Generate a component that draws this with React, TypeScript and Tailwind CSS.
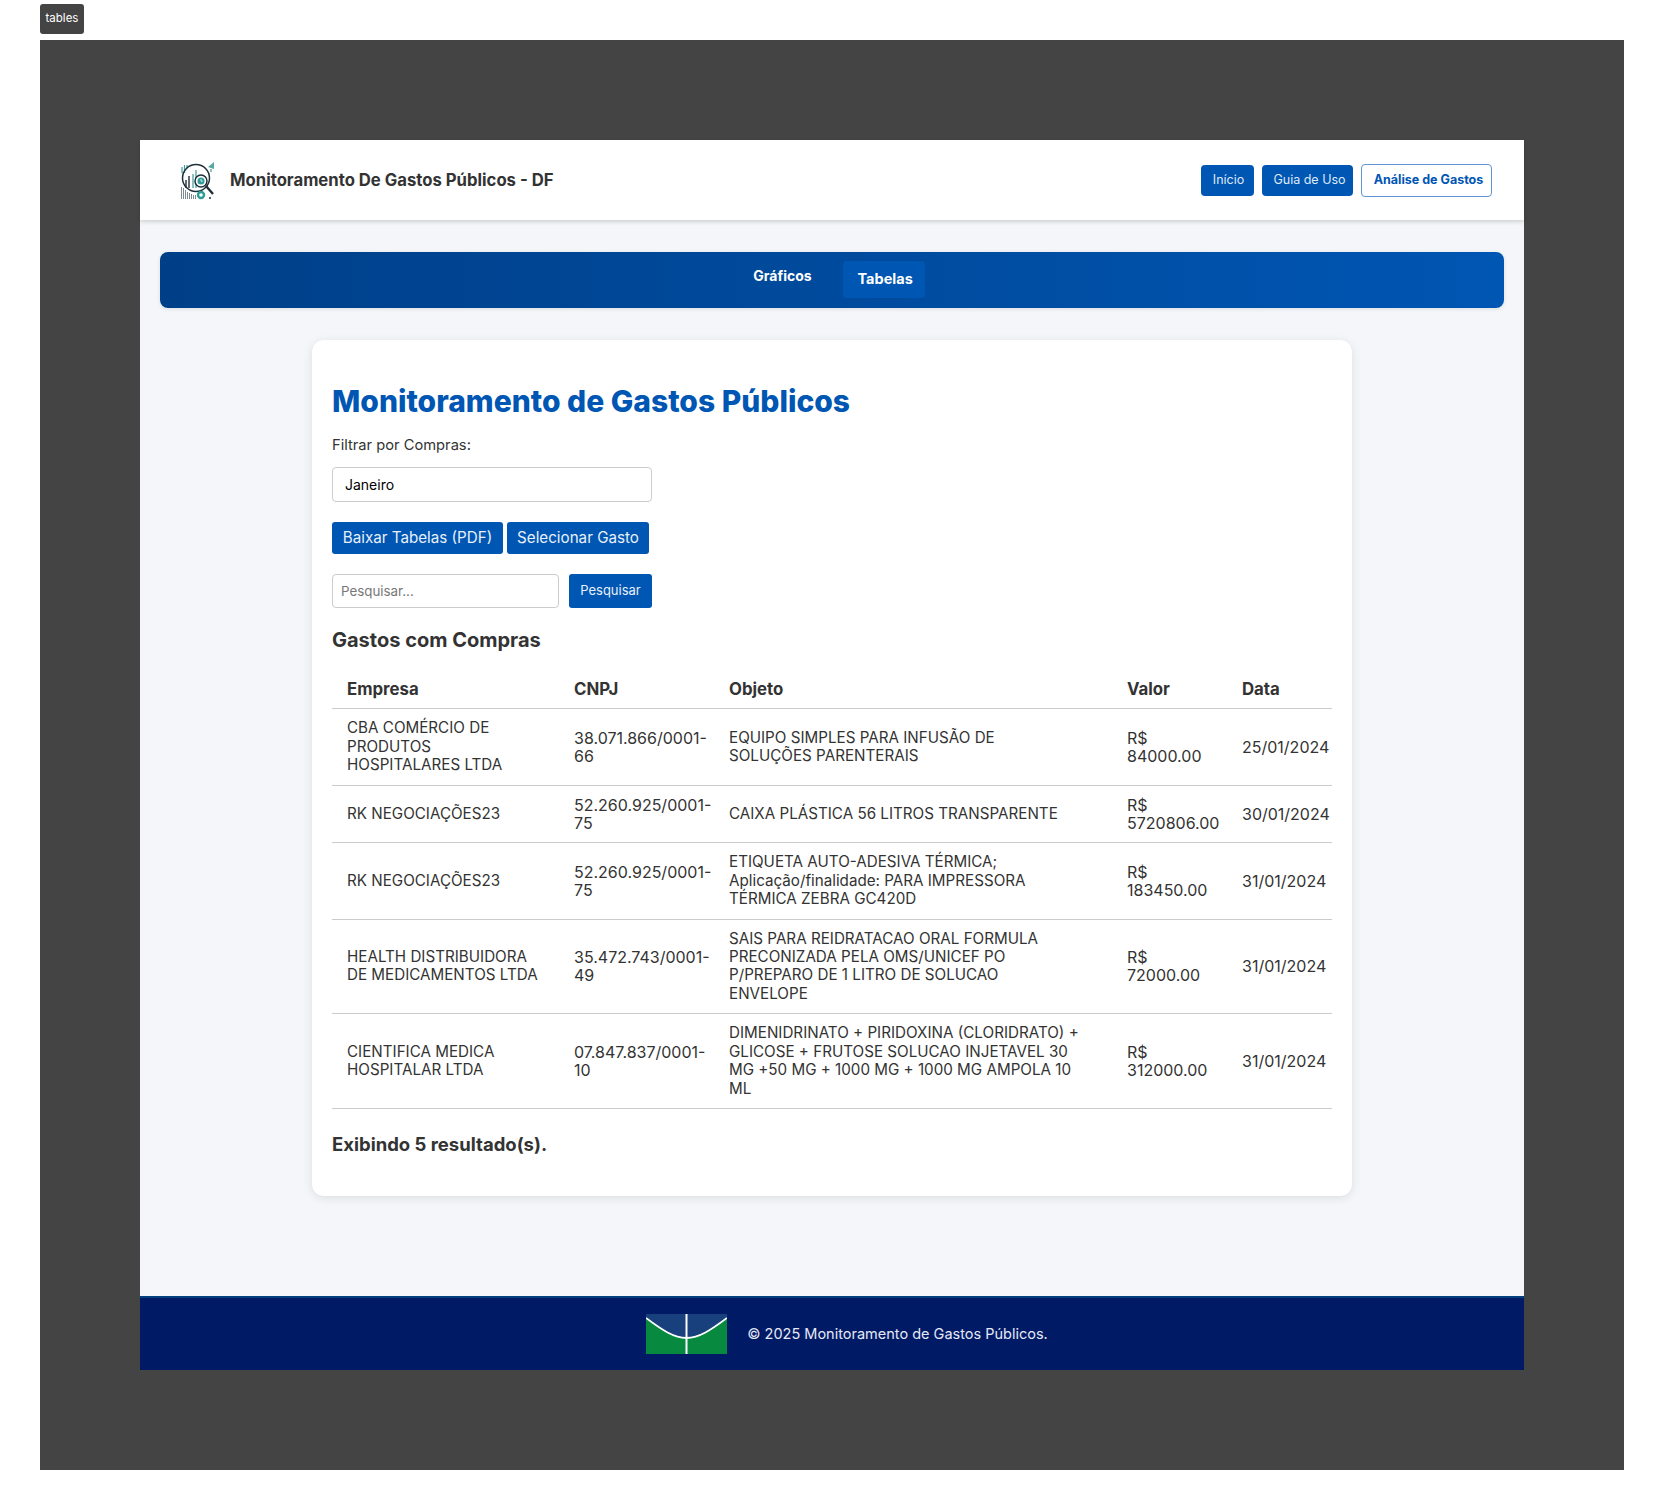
const font = "font-['Inter','Liberation_Sans',sans-serif]";

const rows = [
  { empresa: 'CBA COMÉRCIO DE PRODUTOS HOSPITALARES LTDA', cnpj: '38.071.866/0001-66', objeto: 'EQUIPO SIMPLES PARA INFUSÃO DE\nSOLUÇÕES PARENTERAIS', valor: 'R$ 84000.00', data: '25/01/2024' },
  { empresa: 'RK NEGOCIAÇÕES23', cnpj: '52.260.925/0001-75', objeto: 'CAIXA PLÁSTICA 56 LITROS TRANSPARENTE', valor: 'R$ 5720806.00', data: '30/01/2024' },
  { empresa: 'RK NEGOCIAÇÕES23', cnpj: '52.260.925/0001-75', objeto: 'ETIQUETA AUTO-ADESIVA TÉRMICA;\nAplicação/finalidade: PARA IMPRESSORA\nTÉRMICA ZEBRA GC420D', valor: 'R$ 183450.00', data: '31/01/2024' },
  { empresa: 'HEALTH DISTRIBUIDORA DE MEDICAMENTOS LTDA', cnpj: '35.472.743/0001-49', objeto: 'SAIS PARA REIDRATACAO ORAL FORMULA\nPRECONIZADA PELA OMS/UNICEF PO\nP/PREPARO DE 1 LITRO DE SOLUCAO\nENVELOPE', valor: 'R$ 72000.00', data: '31/01/2024' },
  { empresa: 'CIENTIFICA MEDICA HOSPITALAR LTDA', cnpj: '07.847.837/0001-10', objeto: 'DIMENIDRINATO + PIRIDOXINA (CLORIDRATO) +\nGLICOSE + FRUTOSE SOLUCAO INJETAVEL 30\nMG +50 MG + 1000 MG + 1000 MG AMPOLA 10\nML', valor: 'R$ 312000.00', data: '31/01/2024' },
];

function Logo() {
  return (
    <svg width="36" height="40" viewBox="0 0 36 40" fill="none">
      <path d="M28 7l6-5v7z" fill="#5aa6a0" />
      <g stroke="#3f9c98" strokeWidth="1.2">
        <path d="M2 7v6M4.5 5v8M7 5v3M31 9v3" />
        <path d="M13 14v14M16 10v18" />
      </g>
      <g stroke="#7d8a92" strokeWidth="1" shapeRendering="crispEdges">
        <path d="M1.5 27v12M3.5 28v11M5.5 30v9M7.5 32v7M9.5 33v6M11.5 34v5M13.5 35v4M15.5 35v4" />
      </g>
      <circle cx="16" cy="18" r="13.5" stroke="#1f2f3a" strokeWidth="1.5" fill="none" />
      <path d="M6 20v8M9 16v12" stroke="#1f2f3a" strokeWidth="1.4" />
      <circle cx="21" cy="21" r="6" fill="#fff" stroke="#1f2f3a" strokeWidth="1.5" />
      <circle cx="21" cy="21" r="3.5" fill="#2c9c95" />
      <path d="M21 19v2.2h1.8" stroke="#fff" strokeWidth="0.8" />
      <path d="M26 26l7 8" stroke="#1f2f3a" strokeWidth="2.4" />
      <circle cx="21" cy="35" r="3" stroke="#2c9c95" strokeWidth="2.4" />
      <circle cx="30" cy="38" r="1" fill="#1f2f3a" />
    </svg>
  );
}

function Flag() {
  return (
    <svg width="81" height="40" viewBox="0 0 81 40" className="shrink-0">
      <rect width="81" height="40" fill="#17407c" />
      <path d="M0 4C16 16 28 24 40.5 24S65 16 81 4V40H0z" fill="#078a40" />
      <path d="M0 4C16 16 28 24 40.5 24S65 16 81 4" stroke="#fff" strokeWidth="1.8" fill="none" />
      <path d="M40.5 0v40" stroke="#fff" strokeWidth="2" />
    </svg>
  );
}

export default function App() {
  return (
    <div className={`${font} bg-white pt-1 pb-10 px-10 text-[#333]`}>
      <div className="w-[44px] h-[30px] bg-[#444] rounded-[3px] text-white text-[11.5px] flex items-center justify-center">tables</div>
      <div className="mt-[6px] bg-[#444] p-[100px]">
        <header className="h-20 bg-white flex items-center justify-between pl-10 pr-8 shadow-[0_2px_4px_rgba(0,0,0,0.15)] relative">
          <div className="flex items-center gap-[14px]">
            <Logo />
            <span className="text-[16.7px] font-bold text-[#333] pt-[2px]">Monitoramento De Gastos Públicos - DF</span>
          </div>
          <nav className="flex items-center gap-2 text-[12.5px]">
            <a className="h-[31px] w-[53px] bg-[#0056b3] text-[#dfe9f5] rounded-[4px] flex items-center justify-center pl-[2px]">Início</a>
            <a className="h-[31px] w-[91px] bg-[#0056b3] text-[#dfe9f5] rounded-[4px] flex items-center justify-center pl-1">Guia de Uso</a>
            <a className="h-[33px] w-[131px] bg-white border border-[#5f95d2] text-[#0056b3] font-bold rounded-[4px] flex items-center justify-center pl-1">Análise de Gastos</a>
          </nav>
        </header>
        <main className="bg-[#f4f6f9] pt-8 pb-[100px] px-5">
          <div className="h-14 rounded-lg bg-gradient-to-r from-[#003f88] to-[#0056b3] flex justify-center items-start text-white text-[14px] font-bold pl-[15px] shadow-[0_1px_4px_rgba(0,0,0,0.1)]">
            <span className="mt-[13px] mr-[30px]">Gráficos</span>
            <span className="mt-2 w-[84px] h-[39px] pb-[2px] pl-[3px] rounded-[4px] bg-[#0056b3] border border-[#004a9c] text-[14.5px] flex items-center justify-center">Tabelas</span>
          </div>
          <section className="w-[1040px] mx-auto mt-8 bg-white rounded-xl shadow-[0_2px_10px_rgba(0,0,0,0.1)] px-5 pt-[42px] pb-10">
            <h1 className="text-[30px] leading-[38px] font-extrabold text-[#0056b3]">Monitoramento de Gastos Públicos</h1>
            <label className="block mt-[15px] text-[14.7px] leading-5 text-[#333]">Filtrar por Compras:</label>
            <div className="mt-[12px] w-[320px] h-[35px] border border-[#ccc] rounded-[4px] bg-white flex items-center pl-3 text-[14px] text-black">Janeiro</div>
            <div className="mt-5 flex gap-1">
              <button className="h-8 w-[171px] bg-[#0056b3] text-[#e8f0f9] rounded-[3px] text-[15.2px]">Baixar Tabelas (PDF)</button>
              <button className="h-8 w-[142px] bg-[#0056b3] text-[#e8f0f9] rounded-[3px] text-[15.2px]">Selecionar Gasto</button>
            </div>
            <div className="mt-5 flex gap-[10px]">
              <input placeholder="Pesquisar..." className="w-[227px] h-[34px] border border-[#ccc] rounded-[4px] bg-white px-2 text-[13.33px] placeholder:text-[#777]" />
              <button className="w-[83px] h-[34px] bg-[#0056b3] text-[#e8f0f9] rounded-[3px] text-[13px]">Pesquisar</button>
            </div>
            <h2 className="mt-5 text-[20px] leading-6 font-bold text-[#333]">Gastos com Compras</h2>
            <table className="mt-[18px] w-[1000px] table-fixed border-collapse text-[16px] leading-[18.4px] text-[#333]">
              <colgroup>
                <col className="w-[227px]" />
                <col className="w-[155px]" />
                <col className="w-[398px]" />
                <col className="w-[115px]" />
                <col className="w-[105px]" />
              </colgroup>
              <thead>
                <tr className="border-b border-[#ccc] text-left text-[16.8px]">
                  <th className="pl-[15px] py-[10px] font-bold">Empresa</th>
                  <th className="pl-[15px] py-[10px] font-bold">CNPJ</th>
                  <th className="pl-[15px] py-[10px] font-bold">Objeto</th>
                  <th className="pl-[15px] py-[10px] font-bold">Valor</th>
                  <th className="pl-[15px] py-[10px] font-bold">Data</th>
                </tr>
              </thead>
              <tbody>
                {rows.map((row, idx) => (
                  <tr key={idx} className="border-b border-[#ccc]">
                    <td className="pl-[15px] pr-3 py-[10px] text-[15.2px]">{row.empresa}</td>
                    <td className="pl-[15px] py-[10px]">{row.cnpj}</td>
                    <td className="pl-[15px] pr-3 py-[10px] text-[15.2px] whitespace-pre-line">{row.objeto}</td>
                    <td className="pl-[15px] pr-3 py-[10px]">{row.valor}</td>
                    <td className="pl-[15px] py-[10px] whitespace-nowrap">{row.data}</td>
                  </tr>
                ))}
              </tbody>
            </table>
            <p className="mt-[23px] text-[18.5px] leading-6 font-bold text-[#333]">Exibindo 5 resultado(s).</p>
          </section>
        </main>
        <footer className="h-[74px] bg-[#001a66] border-t-2 border-[#004080] flex items-center justify-center gap-5 pl-[30px] text-[14.5px] text-[#e6e9f5]">
          <Flag />
          <span>© 2025 Monitoramento de Gastos Públicos.</span>
        </footer>
      </div>
    </div>
  );
}
